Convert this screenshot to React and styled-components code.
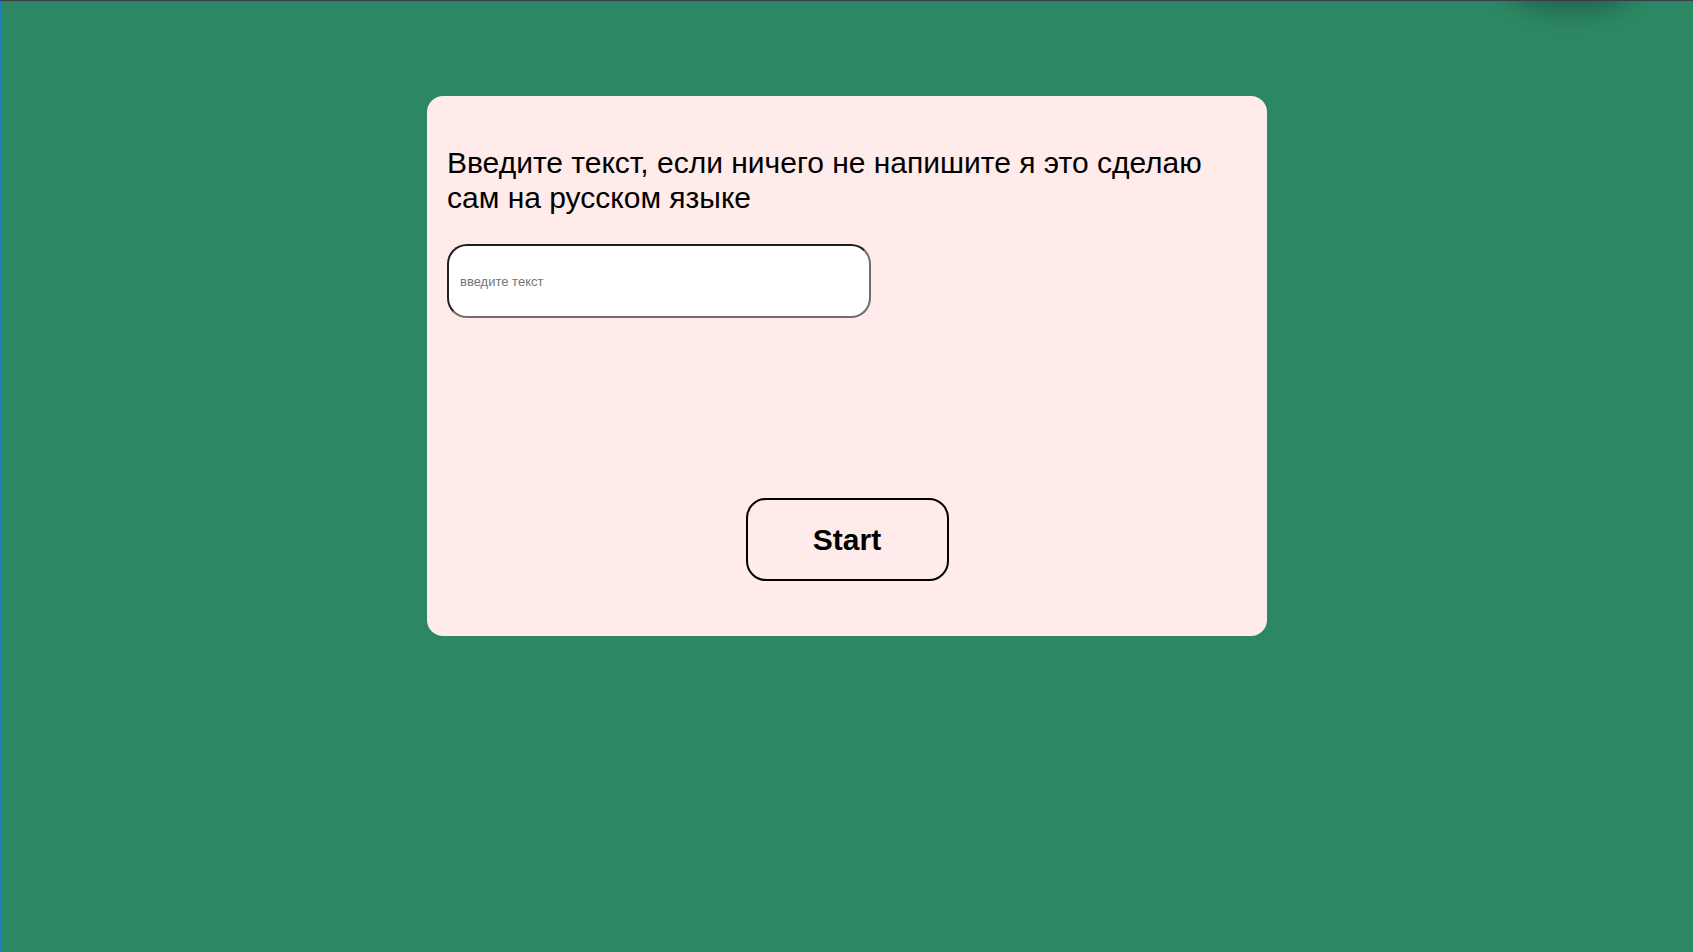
import styled, { createGlobalStyle } from 'styled-components'

const GlobalStyle = createGlobalStyle`
  html, body {
    margin: 0;
    padding: 0;
  }
  body {
    font-family: "Liberation Sans", Arial, sans-serif;
    background: #2c8864;
  }
`

const Page = styled.div`
  position: relative;
  min-height: 100vh;
  box-sizing: border-box;
  background: #2c8864;
  border-top: 1px solid #3a3d47;
  border-left: 1px solid #1f78c8;
  padding-top: 95px;
  display: flex;
  flex-direction: column;
  align-items: center;
  overflow: hidden;
`

const TopShade = styled.div`
  position: absolute;
  top: -40px;
  left: 1510px;
  width: 120px;
  height: 40px;
  border-radius: 50%;
  box-shadow: 0 4px 24px 6px rgba(0, 0, 0, 0.28);
`

const Card = styled.div`
  width: 840px;
  height: 540px;
  box-sizing: border-box;
  background: #ffebea;
  border-radius: 16px;
  padding: 50px 20px 0;
  display: flex;
  flex-direction: column;
`

const Title = styled.h2`
  margin: 0;
  font-size: 30px;
  font-weight: 400;
  line-height: 34.5px;
  color: #000;
  max-width: 790px;
`

const TextInput = styled.input`
  margin-top: 29px;
  width: 424px;
  height: 74px;
  box-sizing: border-box;
  padding: 0 11px;
  border: 2px solid;
  border-color: #1f1f1f #6e6e6e #6e6e6e #1f1f1f;
  border-radius: 20px;
  background: #fff;
  font-family: "Liberation Sans", Arial, sans-serif;
  font-size: 13px;
  outline: none;

  &::placeholder {
    color: #757575;
  }
`

const StartButton = styled.button`
  align-self: center;
  margin-top: 180px;
  width: 203px;
  height: 83px;
  box-sizing: border-box;
  border: 2px solid #000;
  border-radius: 20px;
  background: transparent;
  font-family: "Liberation Sans", Arial, sans-serif;
  font-size: 30px;
  font-weight: 700;
  color: #000;
  cursor: pointer;
`

function App() {
  return (
    <>
      <GlobalStyle />
      <Page>
        <TopShade />
        <Card>
          <Title>Введите текст, если ничего не напишите я это сделаю сам на русском языке</Title>
          <TextInput type="text" placeholder="введите текст" />
          <StartButton>Start</StartButton>
        </Card>
      </Page>
    </>
  )
}

export default App
